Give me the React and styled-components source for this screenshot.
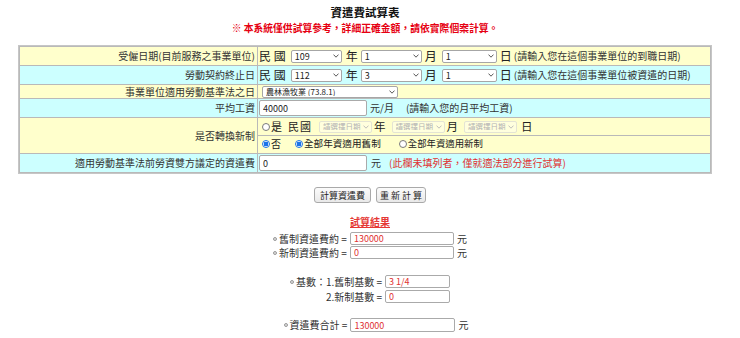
import React from "react";
import styled, { createGlobalStyle } from "styled-components";

const GlobalStyle = createGlobalStyle`
  html, body { margin: 0; padding: 0; background: #fff; }
  body {
    font-family: "Noto Sans CJK TC", "Noto Sans", "Liberation Sans", sans-serif;
    color: #222;
  }
  * { box-sizing: border-box; }
`;

const Page = styled.div`
  width: 740px;
  padding-top: 5px;
`;

const Header = styled.header`
  width: 694px;
  margin-left: 18px;
  display: flex;
  flex-direction: column;
  align-items: center;
`;

const Title = styled.h1`
  margin: 0;
  font-size: 11.5px;
  line-height: 14px;
  font-weight: 700;
  color: #111;
`;

const Notice = styled.p`
  margin: 3px 0 0;
  font-size: 9.8px;
  line-height: 13px;
  font-weight: 700;
  color: #e60012;
`;

const FormTable = styled.table`
  width: 694px;
  margin: 10px 0 0 18px;
  border: 1px solid #c6c6c6;
  border-spacing: 1px;
  background: #b9b9b9;
  font-size: 10px;
  line-height: 1.2;
`;

const Cell = styled.td`
  padding: 0;
  height: ${(p) => p.$h}px;
  background: ${(p) => (p.$tone === "cyan" ? "#ccffff" : "#ffffcc")};
  white-space: nowrap;
`;

const LabelCell = styled(Cell)`
  width: 237px;
  text-align: right;
  padding-right: 2px;
  color: #333;
`;

const ValueLine = styled.div`
  display: flex;
  align-items: center;
  height: ${(p) => p.$h || 18}px;
  padding-left: 1px;
  white-space: nowrap;
  border-bottom: ${(p) => (p.$divider ? "1px solid #b9b9b9" : "none")};
`;

const Unit = styled.span`
  font-size: ${(p) => p.$size || 12}px;
  letter-spacing: ${(p) => p.$ls || 0}px;
  margin-left: ${(p) => p.$ml || 0}px;
  line-height: 1;
  color: #222;
  flex: none;
`;

const Hint = styled.span`
  font-size: 10px;
  margin-left: ${(p) => p.$ml || 0}px;
  color: ${(p) => (p.$red ? "#e03131" : "#333")};
  line-height: 1;
`;

const SelectWrap = styled.span`
  position: relative;
  display: inline-flex;
  flex: none;
  width: ${(p) => p.$w}px;
  height: ${(p) => p.$h || 13}px;
  margin-left: ${(p) => p.$ml || 0}px;
`;

const NativeSelect = styled.select`
  appearance: none;
  -webkit-appearance: none;
  width: 100%;
  height: 100%;
  margin: 0;
  padding: 0 10px 0 3px;
  font-family: inherit;
  font-size: ${(p) => p.$fs || 9}px;
  line-height: 1;
  color: ${(p) => (p.$muted ? "#b2b2b2" : "#222")};
  background: ${(p) => (p.$muted ? "rgba(255,255,255,0.35)" : "#fff")};
  border: 1px solid ${(p) => (p.$muted ? "#e4e4d4" : "#a6a6a6")};
  border-radius: 2px;
  outline: none;
`;

const Chevron = styled.svg`
  position: absolute;
  right: 3px;
  top: 50%;
  transform: translateY(-50%);
  width: 6px;
  height: 4px;
  pointer-events: none;
`;

const TextInput = styled.input`
  flex: none;
  width: ${(p) => p.$w}px;
  height: ${(p) => p.$h || 16}px;
  margin: 0 0 0 ${(p) => p.$ml || 0}px;
  padding: 0 3px;
  font-family: inherit;
  font-size: 9px;
  color: ${(p) => (p.$red ? "#e03131" : "#222")};
  background: #fff;
  border: 1px solid #aaaaaa;
  border-radius: 2px;
  outline: none;
`;

const Choice = styled.label`
  display: inline-flex;
  align-items: center;
  flex: none;
  gap: 1px;
  margin-left: ${(p) => p.$ml || 0}px;
  font-size: ${(p) => p.$fs || 10}px;
  line-height: 1;
  color: #222;
`;

const Radio = styled.input.attrs({ type: "radio" })`
  appearance: none;
  -webkit-appearance: none;
  width: 8px;
  height: 8px;
  margin: 0;
  border-radius: 50%;
  border: 1px solid #7a7a7a;
  background: #fff;
  &:checked {
    border-color: #1a73e8;
    background: radial-gradient(circle, #1a73e8 0 2.2px, #fff 2.6px);
  }
`;

const Actions = styled.div`
  display: flex;
  justify-content: center;
  gap: 5px;
  margin-top: 13px;
`;

const Button = styled.button`
  height: 16px;
  padding: 0 ${(p) => p.$px || 5}px;
  font-family: inherit;
  font-size: 9px;
  line-height: 1;
  color: #222;
  background: linear-gradient(#fbfbfb, #e9e9e9);
  border: 1px solid #a9a9a9;
  border-radius: 3px;
`;

const ResultTitle = styled.h2`
  margin: 12px 0 0;
  font-size: 10px;
  line-height: 14px;
  font-weight: 700;
  color: #e53935;
  text-decoration: underline;
  text-align: center;
`;

const ResultGroup = styled.div`
  display: grid;
  grid-template-columns: repeat(${(p) => p.$cols || 3}, auto);
  justify-content: center;
  align-items: center;
  row-gap: ${(p) => p.$rowGap || 1}px;
  column-gap: 3px;
  margin-top: ${(p) => p.$mt || 0}px;
  padding-left: ${(p) => p.$shift || 0}px;
`;

const ResultLabel = styled.span`
  justify-self: end;
  display: inline-flex;
  align-items: center;
  gap: 1px;
  font-size: 10px;
  line-height: 1;
  color: #333;
  white-space: nowrap;
`;

const Bullet = styled.i`
  width: 4px;
  height: 4px;
  margin-right: 1px;
  border-radius: 50%;
  border: 1px solid #9a9a9a;
  background: #dedede;
`;

const Yuan = styled.span`
  font-size: 10px;
  line-height: 1;
  color: #333;
`;

function Select({ w, h, ml, fs, muted, value, options }) {
  return (
    <SelectWrap $w={w} $h={h} $ml={ml}>
      <NativeSelect $fs={fs} $muted={muted} defaultValue={value}>
        {options.map((o) => (
          <option key={o} value={o}>
            {o}
          </option>
        ))}
      </NativeSelect>
      <Chevron viewBox="0 0 6 4">
        <path
          d="M0.5 0.6 L3 3.2 L5.5 0.6"
          fill="none"
          stroke={muted ? "#b8b8b8" : "#444"}
          strokeWidth="0.9"
        />
      </Chevron>
    </SelectWrap>
  );
}

const years = ["108", "109", "110", "111", "112", "113"];
const months = Array.from({ length: 12 }, (_, i) => String(i + 1));
const days = Array.from({ length: 31 }, (_, i) => String(i + 1));
const pick = ["請選擇日期"];

function DateLine({ year, month, day, hint }) {
  return (
    <ValueLine $h={18}>
      <Unit>民 國</Unit>
      <Select w={51} ml={5} value={year} options={years} />
      <Unit $ml={4}>年</Unit>
      <Select w={61} ml={3} value={month} options={months} />
      <Unit $ml={3}>月</Unit>
      <Select w={55} ml={5} value={day} options={days} />
      <Unit $ml={3}>日</Unit>
      <Hint $ml={2}>{hint}</Hint>
    </ValueLine>
  );
}

export default function App() {
  return (
    <Page>
      <GlobalStyle />
      <Header>
        <Title>資遣費試算表</Title>
        <Notice>※ 本系統僅供試算參考，詳細正確金額，請依實際個案計算。</Notice>
      </Header>

      <FormTable>
        <tbody>
          <tr>
            <LabelCell $h={18}>受僱日期(目前服務之事業單位)</LabelCell>
            <Cell $h={18}>
              <DateLine year="109" month="1" day="1" hint="(請輸入您在這個事業單位的到職日期)" />
            </Cell>
          </tr>
          <tr>
            <LabelCell $h={18} $tone="cyan">勞動契約終止日</LabelCell>
            <Cell $h={18} $tone="cyan">
              <DateLine year="112" month="3" day="1" hint="(請輸入您在這個事業單位被資遣的日期)" />
            </Cell>
          </tr>
          <tr>
            <LabelCell $h={13}>事業單位適用勞動基準法之日</LabelCell>
            <Cell $h={13}>
              <ValueLine $h={13}>
                <Select
                  w={136}
                  h={12}
                  ml={3}
                  fs={8}
                  value="農林漁牧業 (73.8.1)"
                  options={["農林漁牧業 (73.8.1)", "製造業 (73.8.1)", "營造業 (73.8.1)"]}
                />
              </ValueLine>
            </Cell>
          </tr>
          <tr>
            <LabelCell $h={18} $tone="cyan">平均工資</LabelCell>
            <Cell $h={18} $tone="cyan">
              <ValueLine $h={18}>
                <TextInput $w={108} defaultValue="40000" />
                <Hint $ml={3}>元/月</Hint>
                <Hint $ml={12}>(請輸入您的月平均工資)</Hint>
              </ValueLine>
            </Cell>
          </tr>
          <tr>
            <LabelCell $h={35}>是否轉換新制</LabelCell>
            <Cell $h={35}>
              <ValueLine $h={17} $divider>
                <Choice $ml={3} $fs={11}>
                  <Radio name="convert" />是
                </Choice>
                <Unit $size={11} $ls={1} $ml={6}>民國</Unit>
                <Select w={53} h={12} ml={7} fs={7.5} muted value="請選擇日期" options={pick} />
                <Unit $size={11.5} $ml={2}>年</Unit>
                <Select w={53} h={12} ml={6} fs={7.5} muted value="請選擇日期" options={pick} />
                <Unit $size={11.5} $ml={2}>月</Unit>
                <Select w={53} h={12} ml={6} fs={7.5} muted value="請選擇日期" options={pick} />
                <Unit $size={11.5} $ml={4}>日</Unit>
              </ValueLine>
              <ValueLine $h={17}>
                <Choice $ml={3}>
                  <Radio name="convert" defaultChecked />否
                </Choice>
                <Choice $ml={14} $fs={9.6}>
                  <Radio name="scheme" defaultChecked />全部年資適用舊制
                </Choice>
                <Choice $ml={18} $fs={9.4}>
                  <Radio name="scheme" />全部年資適用新制
                </Choice>
              </ValueLine>
            </Cell>
          </tr>
          <tr>
            <LabelCell $h={18} $tone="cyan">適用勞動基準法前勞資雙方議定的資遣費</LabelCell>
            <Cell $h={18} $tone="cyan">
              <ValueLine $h={18}>
                <TextInput $w={108} defaultValue="0" />
                <Hint $ml={4}>元</Hint>
                <Hint $ml={8} $red>
                  (此欄未填列者，僅就適法部分進行試算)
                </Hint>
              </ValueLine>
            </Cell>
          </tr>
        </tbody>
      </FormTable>

      <Actions>
        <Button $px={5}>計算資遣費</Button>
        <Button $px={3}>重 新 計 算</Button>
      </Actions>

      <ResultTitle>試算結果</ResultTitle>

      <ResultGroup $mt={3}>
        <ResultLabel>
          <Bullet />舊制資遣費約 =
        </ResultLabel>
        <TextInput $w={104} $h={13} $red defaultValue="130000" />
        <Yuan>元</Yuan>
        <ResultLabel>
          <Bullet />新制資遣費約 =
        </ResultLabel>
        <TextInput $w={104} $h={13} $red defaultValue="0" />
        <Yuan>元</Yuan>
      </ResultGroup>

      <ResultGroup $cols={2} $mt={16} $rowGap={2}>
        <ResultLabel>
          <Bullet />基數：1.舊制基數 =
        </ResultLabel>
        <TextInput $w={65} $h={13} $red defaultValue="3 1/4" />
        <ResultLabel>2.新制基數 =</ResultLabel>
        <TextInput $w={65} $h={13} $red defaultValue="0" />
      </ResultGroup>

      <ResultGroup $mt={15} $shift={12}>
        <ResultLabel>
          <Bullet />資遣費合計 =
        </ResultLabel>
        <TextInput $w={105} $h={14} $red defaultValue="130000" />
        <Yuan>元</Yuan>
      </ResultGroup>
    </Page>
  );
}
